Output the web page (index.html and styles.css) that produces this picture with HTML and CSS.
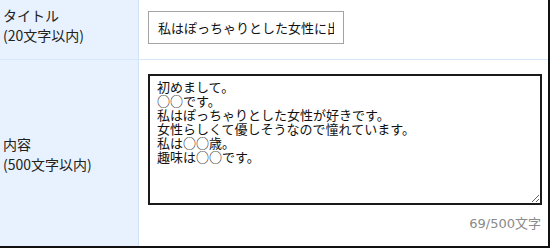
FILE: index.html
```html
<!DOCTYPE html>
<html lang="ja">
<head>
<meta charset="utf-8">
<link rel="stylesheet" href="styles.css">
</head>
<body>
<div class="form">
  <div class="row row-title">
    <div class="label">タイトル<br>(20文字以内)</div>
    <div class="field">
      <input class="text-input" type="text" value="私はぽっちゃりとした女性に出会いたい">
    </div>
  </div>
  <div class="row row-body">
    <div class="label">内容<br>(500文字以内)</div>
    <div class="field field-body">
      <textarea class="textarea">初めまして。
○○です。
私はぽっちゃりとした女性が好きです。
女性らしくて優しそうなので憧れています。
私は○○歳。
趣味は○○です。</textarea>
      <div class="counter">69/500文字</div>
    </div>
  </div>
</div>
</body>
</html>
```
FILE: styles.css
```css
* { box-sizing: border-box; }
html, body { margin: 0; padding: 0; background: #fff; }
body {
  font-family: "Noto Sans CJK JP", "Noto Sans", sans-serif;
  font-size: 13px;
  color: #111;
}
.form {
  width: 550px;
  height: 248px;
  border-right: 2px solid #111;
  border-bottom: 2px solid #111;
  display: flex;
  flex-direction: column;
}
.row {
  display: flex;
}
.row-title {
  height: 60px;
  border-bottom: 1px solid #d6e7fa;
}
.row-body {
  flex: 1;
}
.label {
  width: 139px;
  flex: none;
  background: #e8f2fe;
  border-right: 1px solid #cfe2f8;
  padding-left: 3px;
  font-size: 14px;
  line-height: 20px;
  color: #222;
  display: flex;
  align-items: center;
}
.row-title .label { align-items: flex-start; padding-top: 5px; }
.row-body .label { padding-top: 2px; }
.field {
  flex: 1;
  min-width: 0;
  padding: 11px 0 0 9px;
}
.text-input {
  display: block;
  width: 196px;
  height: 33px;
  border: 1px solid #a3a3a3;
  padding: 0 9px;
  font-family: inherit;
  font-size: 13px;
  color: #111;
  background: #fff;
}
.field-body {
  padding-top: 14px;
  padding-right: 5px;
}
.textarea {
  display: block;
  width: 394px;
  height: 131px;
  border: 2px solid #1a1a1a;
  padding: 4px 7px;
  font-family: inherit;
  font-size: 13px;
  line-height: 14px;
  color: #111;
  resize: vertical;
}
.counter {
  display: flex;
  justify-content: flex-end;
  color: #8a8a8a;
  font-family: "DejaVu Sans", "Noto Sans CJK JP", sans-serif;
  font-size: 13px;
  margin-top: 8px;
  padding-right: 2px;
}
```
